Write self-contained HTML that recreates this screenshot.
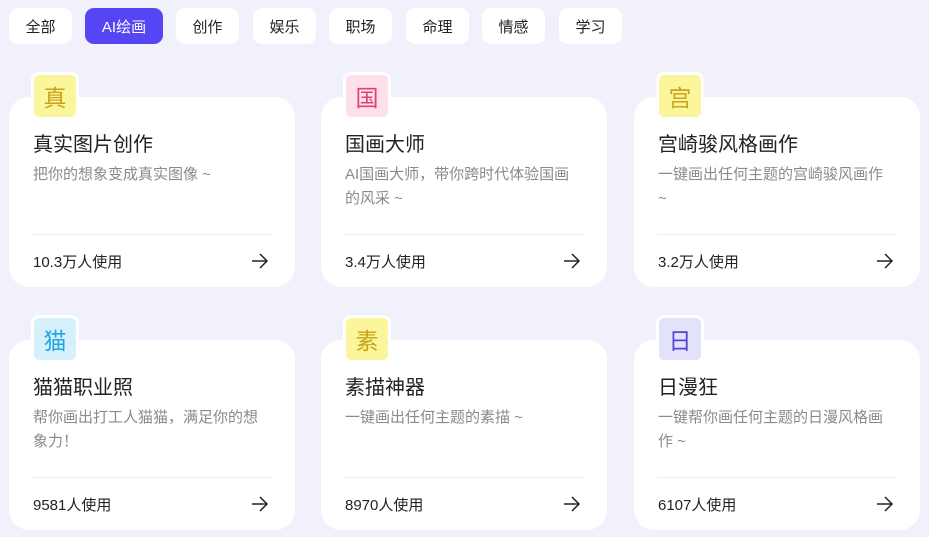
<!DOCTYPE html>
<html><head><meta charset="utf-8"><style>
*{margin:0;padding:0;box-sizing:border-box}
body{width:929px;height:537px;overflow:hidden;background:#f1f1fc;font-family:"Liberation Sans","Noto Sans CJK SC",sans-serif;position:relative}
.tab{position:absolute;top:8px;height:36px;width:63px;background:#fff;border-radius:9px;font-size:15px;color:#222;display:flex;align-items:center;justify-content:center}
.tab.on{background:#5645f5;color:#fff;width:78px}
.card{position:absolute;width:286px;height:190px;background:#fff;border-radius:20px}
.ic{position:absolute;left:22px;top:-25px;width:48px;height:48px;border-radius:8px;border:3px solid #fff;display:flex;align-items:center;justify-content:center;font-size:23px}
.t{position:absolute;left:24px;top:31px;font-size:20px;color:#222}
.d{position:absolute;left:24px;top:66px;width:232px;font-size:15px;line-height:24px;color:#8a8a8a}
.hr{position:absolute;left:23px;right:22px;top:137px;border-top:1px solid #eee}
.u{position:absolute;left:24px;top:154px;font-size:15px;color:#222}
.ar{position:absolute;left:241px;top:155px}
</style></head><body>
<div class="tab" style="left:9px">全部</div>
<div class="tab on" style="left:85px">AI绘画</div>
<div class="tab" style="left:176px">创作</div>
<div class="tab" style="left:253px">娱乐</div>
<div class="tab" style="left:329px">职场</div>
<div class="tab" style="left:406px">命理</div>
<div class="tab" style="left:482px">情感</div>
<div class="tab" style="left:559px">学习</div>

<div class="card" style="left:9px;top:97px"><div class="ic" style="background:#fbf59b;color:#c9a416">真</div><div class="t">真实图片创作</div><div class="d">把你的想象变成真实图像 ~</div><div class="hr"></div><div class="u">10.3万人使用</div><svg class="ar" width="20" height="18" viewBox="0 0 20 18"><path d="M2 9H17M10 2L17 9L10 16" fill="none" stroke="#222" stroke-width="1.5"/></svg></div>
<div class="card" style="left:321px;top:97px"><div class="ic" style="background:#fde0ea;color:#e0407a">国</div><div class="t">国画大师</div><div class="d">AI国画大师，带你跨时代体验国画的风采 ~</div><div class="hr"></div><div class="u">3.4万人使用</div><svg class="ar" width="20" height="18" viewBox="0 0 20 18"><path d="M2 9H17M10 2L17 9L10 16" fill="none" stroke="#222" stroke-width="1.5"/></svg></div>
<div class="card" style="left:634px;top:97px"><div class="ic" style="background:#fbf59b;color:#c9a416">宫</div><div class="t">宫崎骏风格画作</div><div class="d">一键画出任何主题的宫崎骏风画作<br>~</div><div class="hr"></div><div class="u">3.2万人使用</div><svg class="ar" width="20" height="18" viewBox="0 0 20 18"><path d="M2 9H17M10 2L17 9L10 16" fill="none" stroke="#222" stroke-width="1.5"/></svg></div>

<div class="card" style="left:9px;top:340px"><div class="ic" style="background:#d6f1fb;color:#1fa8df">猫</div><div class="t">猫猫职业照</div><div class="d">帮你画出打工人猫猫，满足你的想象力！</div><div class="hr"></div><div class="u">9581人使用</div><svg class="ar" width="20" height="18" viewBox="0 0 20 18"><path d="M2 9H17M10 2L17 9L10 16" fill="none" stroke="#222" stroke-width="1.5"/></svg></div>
<div class="card" style="left:321px;top:340px"><div class="ic" style="background:#fbf59b;color:#c9a416">素</div><div class="t">素描神器</div><div class="d">一键画出任何主题的素描 ~</div><div class="hr"></div><div class="u">8970人使用</div><svg class="ar" width="20" height="18" viewBox="0 0 20 18"><path d="M2 9H17M10 2L17 9L10 16" fill="none" stroke="#222" stroke-width="1.5"/></svg></div>
<div class="card" style="left:634px;top:340px"><div class="ic" style="background:#e3e2fb;color:#5645d5">日</div><div class="t">日漫狂</div><div class="d">一键帮你画任何主题的日漫风格画作 ~</div><div class="hr"></div><div class="u">6107人使用</div><svg class="ar" width="20" height="18" viewBox="0 0 20 18"><path d="M2 9H17M10 2L17 9L10 16" fill="none" stroke="#222" stroke-width="1.5"/></svg></div>
</body></html>
